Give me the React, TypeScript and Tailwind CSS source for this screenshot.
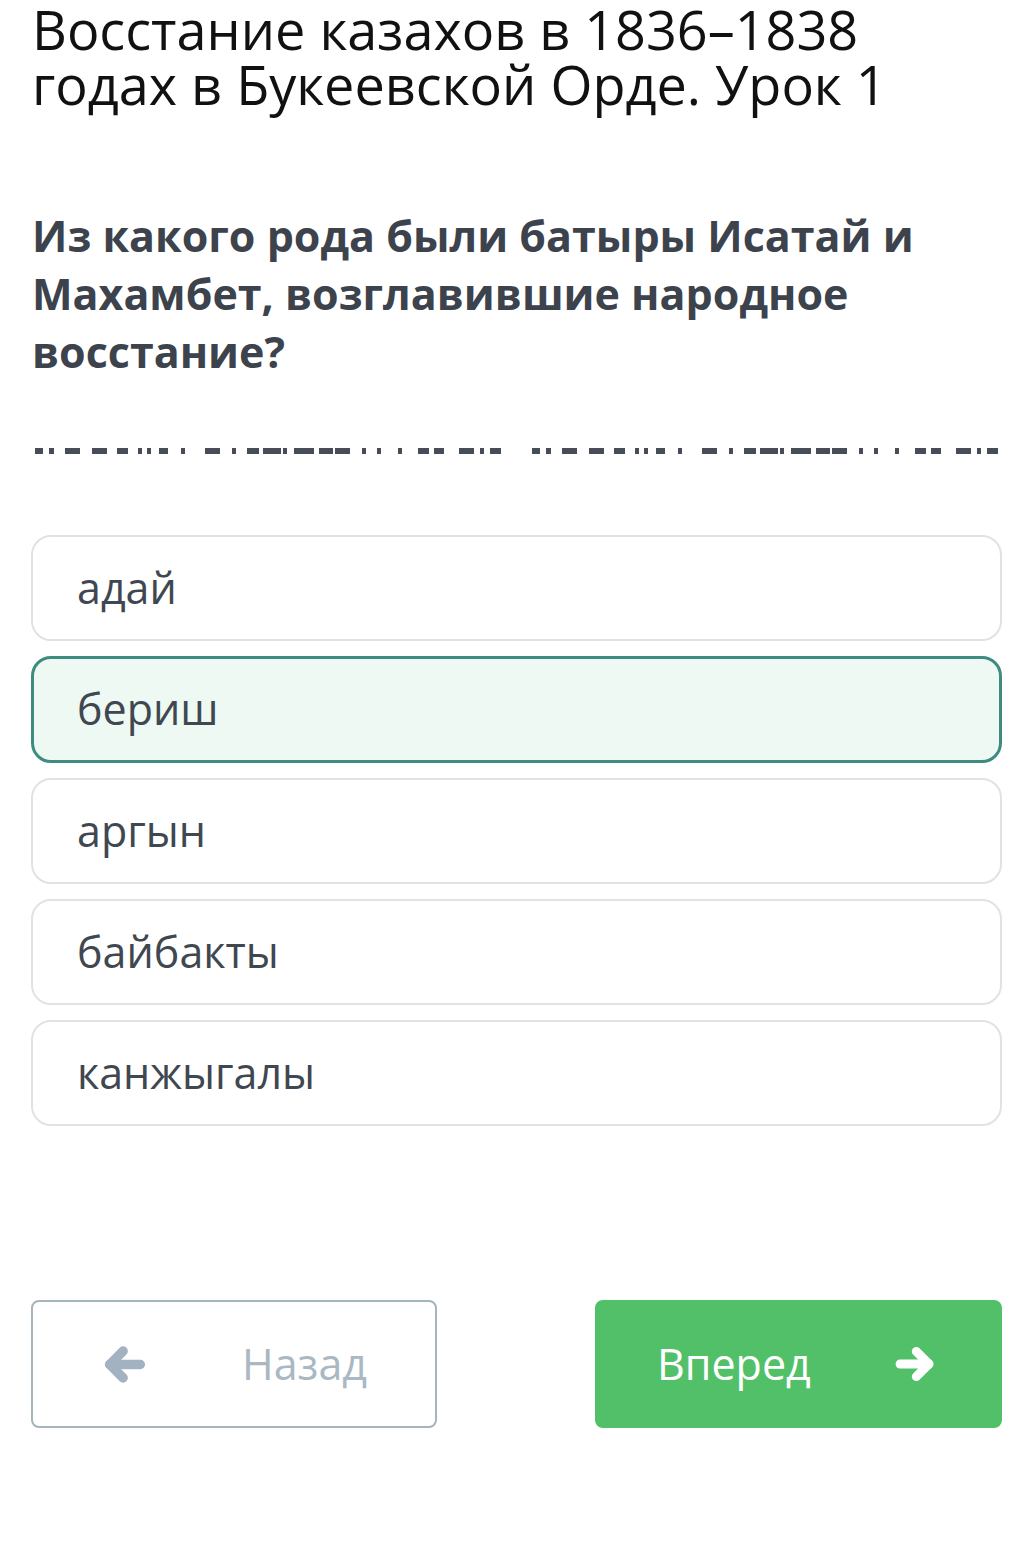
import React from "react";

// dash segments of the blank line: [start, end] in px, one half
const segments: Array<[number, number]> = [
  [0, 8], [14, 18], [29, 44], [55, 70], [80, 90], [100, 104], [109, 113],
  [120, 129], [142, 146], [165, 180], [191, 195], [206, 217], [221, 239],
  [241, 245], [251, 271], [276, 289], [291, 306], [317, 321], [332, 336],
  [352, 356], [372, 383], [387, 397], [412, 426], [432, 436], [442, 452],
];

const options = [
  { label: "адай", selected: false },
  { label: "бериш", selected: true },
  { label: "аргын", selected: false },
  { label: "байбакты", selected: false },
  { label: "канжыгалы", selected: false },
];

const BlankLine = () => (
  <div className="flex h-[6px] gap-[33px]">
    {[0, 1].map((half) => (
      <div key={half} className="relative h-[6px] w-[464px]">
        {segments.map(([a, b], i) => (
          <span
            key={i}
            className="absolute top-0 h-[6px] bg-[#474d56]"
            style={{ left: a * 1.03, width: (b - a) * 1.03 }}
          />
        ))}
      </div>
    ))}
  </div>
);

const Arrow = ({ dir, className }: { dir: "left" | "right"; className?: string }) => (
  <svg
    viewBox="0 0 44 40"
    className={className}
    fill="none"
    stroke="currentColor"
    strokeWidth={10}
    strokeLinecap="round"
    strokeLinejoin="round"
    style={dir === "right" ? { transform: "scaleX(-1)" } : undefined}
  >
    <path d="M20 6 L6 20 L20 34" />
    <path d="M6 20 H38" />
  </svg>
);

export default function App() {
  return (
    <div
      className="min-h-[1552px] w-[1032px] bg-white px-[31px]"
      style={{ fontFamily: '"Open Sans", "Noto Sans", sans-serif' }}
    >
      <h1 className="pt-[2px] text-[54px] leading-[55px] text-[#111] font-normal pl-px">
        Восстание казахов в 1836–1838
        <br />
        годах в Букеевской Орде. Урок 1
      </h1>

      <p className="mt-[95px] text-[43px] leading-[58px] font-bold text-[#3c434c] pl-px">
        Из какого рода были батыры Исатай и Махамбет, возглавившие народное
        восстание?
      </p>

      <div className="mt-[67px] pl-[4px]">
        <BlankLine />
      </div>

      <div className="mt-[81px] flex flex-col gap-[15px] w-[971px]">
        {options.map((o) => (
          <div
            key={o.label}
            className={
              o.selected
                ? "h-[107px] rounded-[20px] border-[3px] border-[#3e8c80] bg-[#edf9f2] flex items-center pl-[43px] text-[43px] text-[#3f4750]"
                : "h-[106px] rounded-[20px] border-2 border-[#dfe3e6] bg-white flex items-center pl-[44px] text-[43px] text-[#3f4750]"
            }
          >
            {o.label}
          </div>
        ))}
      </div>

      <div className="mt-[174px] flex justify-between w-[971px]">
        <button className="h-[128px] w-[406px] rounded-[8px] border-2 border-[#a6b4bb] bg-white flex items-center pl-[71px] text-[43px] text-[#a9b8c3]">
          <Arrow dir="left" className="text-[#a2b2c1] w-[42px] h-[39px]" />
          <span className="ml-[96px]">Назад</span>
        </button>
        <button className="h-[128px] w-[407px] rounded-[8px] bg-[#52c069] flex items-center pl-[62px] text-[43px] text-white">
          <span>Вперед</span>
          <Arrow dir="right" className="ml-[82px] w-[43px] h-[36px]" />
        </button>
      </div>
    </div>
  );
}
